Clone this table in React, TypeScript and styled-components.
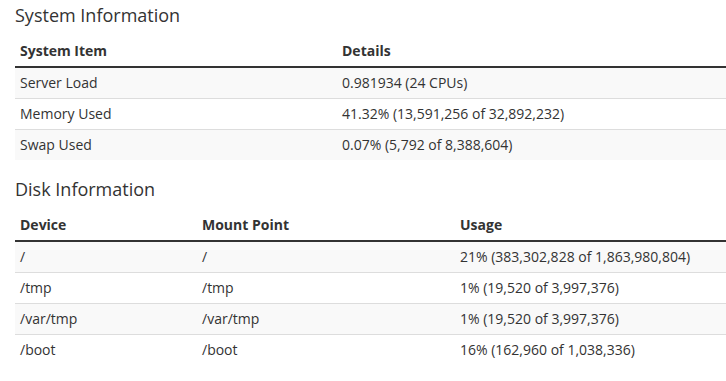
import React from "react";
import styled, { createGlobalStyle } from "styled-components";

const GlobalStyle = createGlobalStyle`
  html, body {
    margin: 0;
    padding: 0;
    background: #fff;
  }
  body {
    font-family: "Open Sans", "Liberation Sans", sans-serif;
    font-size: 14px;
    line-height: 20px;
    color: #333;
  }
  * { box-sizing: border-box; }
`;

const Page = styled.div`
  padding: 6px 0 0 15px;
  overflow: hidden;
`;

const Heading = styled.h3`
  margin: 0 0 10px;
  font-size: 18px;
  font-weight: 400;
  line-height: 1.1;
  color: #333;
`;

const Table = styled.table`
  width: 100%;
  border-collapse: collapse;
  border-spacing: 0;
  table-layout: fixed;
  margin-bottom: 20px;
`;

const Col = styled.col<{ $w?: number }>`
  width: ${(p) => (p.$w ? `${p.$w}px` : "auto")};
`;

const HeadCell = styled.th`
  text-align: left;
  font-weight: 700;
  padding: 5px;
  line-height: 20px;
  border-bottom: 2px solid #333;
  vertical-align: bottom;
`;

const Row = styled.tr`
  &:nth-child(odd) {
    background: #f9f9f9;
  }
  & + & td {
    border-top: 1px solid #ddd;
  }
`;

const Cell = styled.td`
  padding: 5px;
  line-height: 20px;
  vertical-align: top;
  white-space: nowrap;
`;

const systemRows = [
  ["Server Load", "0.981934 (24 CPUs)"],
  ["Memory Used", "41.32% (13,591,256 of 32,892,232)"],
  ["Swap Used", "0.07% (5,792 of 8,388,604)"],
];

const diskRows = [
  ["/", "/", "21% (383,302,828 of 1,863,980,804)"],
  ["/tmp", "/tmp", "1% (19,520 of 3,997,376)"],
  ["/var/tmp", "/var/tmp", "1% (19,520 of 3,997,376)"],
  ["/boot", "/boot", "16% (162,960 of 1,038,336)"],
];

export default function App() {
  return (
    <>
      <GlobalStyle />
      <Page>
        <Heading>System Information</Heading>
        <Table>
          <colgroup>
            <Col $w={322} />
            <Col />
          </colgroup>
          <thead>
            <tr>
              <HeadCell>System Item</HeadCell>
              <HeadCell>Details</HeadCell>
            </tr>
          </thead>
          <tbody>
            {systemRows.map((r) => (
              <Row key={r[0]}>
                {r.map((c, i) => (
                  <Cell key={i}>{c}</Cell>
                ))}
              </Row>
            ))}
          </tbody>
        </Table>

        <Heading>Disk Information</Heading>
        <Table>
          <colgroup>
            <Col $w={182} />
            <Col $w={258} />
            <Col />
          </colgroup>
          <thead>
            <tr>
              <HeadCell>Device</HeadCell>
              <HeadCell>Mount Point</HeadCell>
              <HeadCell>Usage</HeadCell>
            </tr>
          </thead>
          <tbody>
            {diskRows.map((r) => (
              <Row key={r[0]}>
                {r.map((c, i) => (
                  <Cell key={i}>{c}</Cell>
                ))}
              </Row>
            ))}
          </tbody>
        </Table>
      </Page>
    </>
  );
}
